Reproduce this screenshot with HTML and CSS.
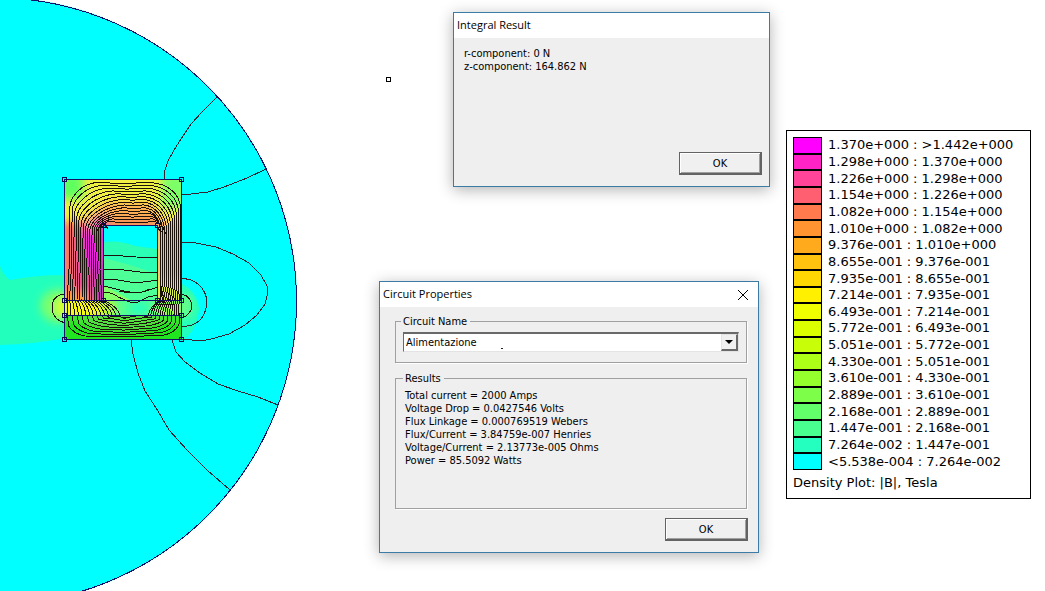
FILE: index.html
```html
<!DOCTYPE html>
<html lang="en">
<head>
<meta charset="utf-8">
<title>Density Plot</title>
<link rel="stylesheet" href="styles.css">
</head>
<body>
<main class="desktop">
  <svg class="plot" width="400" height="591" viewBox="0 0 400 591" aria-label="Flux density plot">
    <defs>
      <filter id="soft" x="-30%" y="-30%" width="160%" height="160%"><feGaussianBlur stdDeviation="4"/></filter>
      <clipPath id="core"><path d="M65 180H182V300H158V225H104V300H65Z"/></clipPath>
      <clipPath id="window"><rect x="104" y="226" width="54" height="75"/></clipPath>
      <clipPath id="gap"><rect x="65" y="300" width="117" height="16"/></clipPath>
      <clipPath id="plate"><rect x="65" y="316" width="117" height="24"/></clipPath>
    </defs>
    <circle cx="-7" cy="301" r="304" fill="#00ffff"/>

    <path d="M0 266Q4 276 10 280Q36 275 66 275V338Q35 344 0 345Z" fill="#22ffbd"/>
    <path d="M182 284Q196 291 199 308Q198 330 182 341Z" fill="#22ffbd"/>
    <g filter="url(#soft)">
      <ellipse cx="58" cy="306" rx="18" ry="17" fill="#77ff70"/>
      <ellipse cx="63" cy="307" rx="8" ry="10" fill="#d8ff20"/>
      <ellipse cx="184" cy="306" rx="9" ry="13" fill="#66ff88"/>
    </g>

    <g clip-path="url(#window)">
      <path d="M104 242Q120 240 135 246L158 249V301H104Z" fill="#2bffb5"/>
      <path d="M104 258L130 265L158 274V301H104Z" fill="#4dff96"/>
      <path d="M104 286L118 293L132 301H104Z" fill="#86ff68"/>
    </g>

    <g clip-path="url(#core)">
      <rect x="65" y="180" width="117" height="121" fill="#eef044"/>
      <g filter="url(#soft)">
        <rect x="58" y="172" width="25" height="27" fill="#60ff60"/>
        <rect x="162" y="174" width="26" height="34" fill="#7dff67"/>
        <rect x="62" y="222" width="46" height="90" fill="#fb7260"/>
        <rect x="74" y="232" width="34" height="66" fill="#ea4f94"/>
        <rect x="83" y="220" width="26" height="50" fill="#f020e0"/>
        <rect x="94" y="262" width="16" height="42" fill="#c030c0"/>
        <path d="M84 220L106 202H150L168 226V232H90Z" fill="#fdb052"/>
        <rect x="94" y="218" width="16" height="16" fill="#d820d8"/>
        <rect x="104" y="219" width="56" height="10" fill="#f58a58"/>
        <rect x="156" y="222" width="28" height="58" fill="#ffb878"/>
        <rect x="158" y="285" width="26" height="22" fill="#d8ee50"/>
        <rect x="62" y="292" width="26" height="16" fill="#ffa535"/>
      </g>
    </g>
    <g clip-path="url(#gap)">
      <rect x="65" y="300" width="117" height="16" fill="#55ff90"/>
      <g filter="url(#soft)">
        <rect x="60" y="296" width="44" height="24" fill="#f8f818"/>
        <rect x="100" y="298" width="15" height="22" fill="#b8f534"/>
        <rect x="130" y="302" width="18" height="12" fill="#28ffc0"/>
        <rect x="158" y="298" width="24" height="22" fill="#9cff4e"/>
      </g>
    </g>
    <g clip-path="url(#plate)">
      <rect x="65" y="316" width="117" height="24" fill="#20e420"/>
      <ellipse cx="123" cy="318" rx="40" ry="15" fill="#55dc42" filter="url(#soft)"/>
      <path d="M65 316H182V322H65Z" fill="#52e63c" filter="url(#soft)"/>
    </g>

    <g class="flux" id="loops"></g>

    <g class="flux">
      <path d="M104 255L116 255.500 136 257 158 257.500M104 269L124 270 140 272H158M104 279L118 280 136 283 158 280M104 286Q116 289 124 291Q138 294 146 291L158 287M104 292Q114 293 118 297L130 302H138L148 297L158 295M119 291L130 293Q144 293 149 289"/>
      <path d="M65 294Q52 295 52 308Q53 320 65 323"/>
      <path d="M182 294Q192 297 192 307Q190 315 182 318"/>
      <path d="M96 232L103 222 108 229M98 228L106 225M156 220L164 228M160 222L166 234M155 226L162 232"/>
    </g>

    <g class="field">
      <path d="M217 97L203 111L191 124L183 136L174 150L168 161L165 170L164 180"/>
      <path d="M266 169L247 178L224 187L208 192L182 195"/>
      <path d="M182 242L196 243L216 247L233 254L249 263L261 275L267 286L268 292L265 304L257 315L245 325L229 334L211 339L201 341L182 339"/>
      <path d="M182 278L191 280Q205 286 207 301Q206 320 192 325L182 327"/>
      <path d="M172 340L176 352L185 362L200 373L218 384L238 391L258 397L278 405"/>
      <path d="M131 340L133 354L138 373L145 391L158 411L169 430L187 450L207 470L230 490"/>
    </g>

    <circle cx="-7" cy="301" r="303.500" class="edge"/>
    <path class="edge" d="M64.500 179.500H181.500V339.500H64.500ZM64.500 300.500H181.500M64.500 315.500H181.500M103.500 300V225.500H157.500V300"/>
    <g class="node">
      <rect x="62.500" y="177.500" width="4" height="4"/><rect x="179.500" y="177.500" width="4" height="4"/>
      <rect x="101.500" y="223.500" width="4" height="4"/><rect x="155.500" y="223.500" width="4" height="4"/>
      <rect x="62.500" y="298.500" width="4" height="4"/><rect x="101.500" y="298.500" width="4" height="4"/>
      <rect x="155.500" y="298.500" width="4" height="4"/><rect x="179.500" y="298.500" width="4" height="4"/>
      <rect x="62.500" y="313.500" width="4" height="4"/><rect x="179.500" y="313.500" width="4" height="4"/>
      <rect x="62.500" y="337.500" width="4" height="4"/><rect x="179.500" y="337.500" width="4" height="4"/>
    </g>
    <rect class="origin" x="386.500" y="77.500" width="4" height="4"/>
  </svg>

  <section class="dialog integral" role="dialog" aria-labelledby="t1">
    <header class="titlebar"><h2 id="t1">Integral Result</h2></header>
    <div class="content">
      <p class="lines">r-component: 0 N<br>z-component: 164.862 N</p>
      <button class="ok" type="button">OK</button>
    </div>
  </section>

  <section class="dialog circuit" role="dialog" aria-labelledby="t2">
    <header class="titlebar"><h2 id="t2">Circuit Properties</h2>
      <button class="close" type="button" aria-label="Close"><svg width="12" height="12" viewBox="0 0 12 12"><path d="M1 1L11 11M11 1L1 11"/></svg></button>
    </header>
    <div class="content">
      <fieldset class="group">
        <legend><label for="circuit">Circuit Name</label></legend>
        <div class="combo">
          <select id="circuit"><option>Alimentazione</option></select>
          <span class="arrow"><svg width="8" height="4" viewBox="0 0 8 4"><path d="M0 0H8L4 4Z"/></svg></span>
        </div>
      </fieldset>
      <fieldset class="group results">
        <legend>Results</legend>
        <p class="lines">Total current = 2000 Amps<br>Voltage Drop = 0.0427546 Volts<br>Flux Linkage = 0.000769519 Webers<br>Flux/Current = 3.84759e-007 Henries<br>Voltage/Current = 2.13773e-005 Ohms<br>Power = 85.5092 Watts</p>
      </fieldset>
      <button class="ok" type="button">OK</button>
    </div>
  </section>

  <aside class="legend">
    <ul class="scale">
      <li><i class="c1"></i>1.370e+000 : &gt;1.442e+000</li>
      <li><i class="c2"></i>1.298e+000 : 1.370e+000</li>
      <li><i class="c3"></i>1.226e+000 : 1.298e+000</li>
      <li><i class="c4"></i>1.154e+000 : 1.226e+000</li>
      <li><i class="c5"></i>1.082e+000 : 1.154e+000</li>
      <li><i class="c6"></i>1.010e+000 : 1.082e+000</li>
      <li><i class="c7"></i>9.376e-001 : 1.010e+000</li>
      <li><i class="c8"></i>8.655e-001 : 9.376e-001</li>
      <li><i class="c9"></i>7.935e-001 : 8.655e-001</li>
      <li><i class="c10"></i>7.214e-001 : 7.935e-001</li>
      <li><i class="c11"></i>6.493e-001 : 7.214e-001</li>
      <li><i class="c12"></i>5.772e-001 : 6.493e-001</li>
      <li><i class="c13"></i>5.051e-001 : 5.772e-001</li>
      <li><i class="c14"></i>4.330e-001 : 5.051e-001</li>
      <li><i class="c15"></i>3.610e-001 : 4.330e-001</li>
      <li><i class="c16"></i>2.889e-001 : 3.610e-001</li>
      <li><i class="c17"></i>2.168e-001 : 2.889e-001</li>
      <li><i class="c18"></i>1.447e-001 : 2.168e-001</li>
      <li><i class="c19"></i>7.264e-002 : 1.447e-001</li>
      <li><i class="c20"></i>&lt;5.538e-004 : 7.264e-002</li>
    </ul>
    <p class="caption">Density Plot: |B|, Tesla</p>
  </aside>
</main>
<script src="flux.js"></script>
</body>
</html>
```
FILE: styles.css
```css
* { box-sizing: border-box; }
body { margin: 0; background: #fff; color: #000; font-family: "DejaVu Sans Condensed", "DejaVu Sans", sans-serif; font-size: 11px; line-height: 13px; }
h2, p, ul { margin: 0; padding: 0; font-weight: normal; }
.desktop { position: relative; min-height: 100vh; overflow: hidden; }
.plot { display: block; }
.flux, .field, .edge, .node, .origin { fill: none; shape-rendering: crispEdges; }
.flux { stroke: #1c120c; }
.field { stroke: #3b2230; }
.edge { stroke: #10106a; }
.node { stroke: #0a0a50; }
.origin { stroke: #000; }

.dialog { position: absolute; display: flex; flex-direction: column; background: #efefef; border: 1px solid #3c7ba6; box-shadow: 0 3px 14px rgba(0, 0, 0, 0.3); }
.integral { left: 453px; top: 12px; width: 317px; height: 175px; }
.circuit { left: 379px; top: 281px; width: 380px; height: 272px; }
.titlebar { display: flex; justify-content: space-between; align-items: center; height: 25px; padding: 0 9px 0 3px; background: #fff; }
.titlebar h2 { font-family: "Open Sans", sans-serif; font-size: 11px; line-height: 16px; padding-bottom: 2px; }
.close { display: flex; padding: 0; border: 0; background: none; }
.close path { stroke: #000; fill: none; }
.content { flex: 1; display: flex; flex-direction: column; padding: 8px 11px 11px 15px; }
.integral .content { padding: 9px 7px 11px 10px; }
.ok { margin-top: auto; align-self: flex-end; width: 83px; height: 23px; padding: 0; font: inherit; color: #000; background: #f0f0f0; border: 1px solid #636363; border-right-width: 2px; border-bottom-width: 2px; box-shadow: inset 1px 1px #fff, inset -1px -1px #a0a0a0; }
.circuit .ok { margin-right: -1px; }

.group { min-width: 0; margin: 0; padding: 4px 7px 10px 7px; border: 1px solid #a0a0a0; box-shadow: 1px 1px #fff; }
.group legend { padding: 0 3px 0 2px; margin-left: -2px; }
.results { flex: none; height: 137px; margin-top: 9px; padding: 4px 9px; }
.combo { position: relative; display: flex; height: 20px; background: #fff; border: 1px solid #e3e3e3; border-top: 2px solid #696969; border-left: 1px solid #696969; }
.combo::after { content: ""; position: absolute; left: 97px; top: 14px; width: 2px; height: 1px; background: #222; }
.combo select { flex: 1; appearance: none; border: 0; padding: 0 0 0 2px; background: transparent; font: inherit; color: #000; }
.arrow { position: absolute; right: 0; top: 0; width: 17px; height: 17px; display: flex; align-items: center; justify-content: center; pointer-events: none; background: #f0f0f0; border: 1px solid #e3e3e3; border-right: 2px solid #696969; border-bottom: 2px solid #696969; }

.legend { position: absolute; left: 786px; top: 130px; width: 245px; padding: 6px 6px 7px; background: #fff; border: 1px solid #000; font-family: "DejaVu Sans", sans-serif; font-size: 13px; line-height: 16px; }
.scale { display: grid; grid-template-rows: repeat(20, 1fr); height: 333px; list-style: none; }
.scale li { display: flex; align-items: center; gap: 6px; white-space: pre; }
.scale i { width: 29px; height: 100%; border: 1px solid #000; }
.caption { margin-top: 5px; }
.c1 { background: #ff00ff; } .c2 { background: #ff22c4; } .c3 { background: #ff4499; } .c4 { background: #ff5f70; }
.c5 { background: #ff7a4c; } .c6 { background: #ff9430; } .c7 { background: #ffaa1c; } .c8 { background: #ffc20e; }
.c9 { background: #ffd804; } .c10 { background: #fff000; } .c11 { background: #f0ff00; } .c12 { background: #dcff00; }
.c13 { background: #c8ff08; } .c14 { background: #adff18; } .c15 { background: #94ff2c; } .c16 { background: #7dff4a; }
.c17 { background: #62ff6a; } .c18 { background: #48ff90; } .c19 { background: #24ffc0; } .c20 { background: #00ffff; }
```
FILE: flux.js
```js
// Flux lines circulating through the core, the air gaps and the lower plate.
const loops = document.getElementById("loops");
const count = 15;
const add = (d) => {
  const path = document.createElementNS("http://www.w3.org/2000/svg", "path");
  path.setAttribute("d", d);
  loops.appendChild(path);
};
for (let k = 0; k < count; k++) {
  const t = k / (count - 1);
  const bow = Math.sin(Math.PI * t);
  const left = 70 + 31 * t;
  const right = Math.max(180.5 - 2 * k, 160.5);
  const top = 182.5 + 2.8 * k;
  const l0 = 67 + 35 * t;
  const l1 = 67 + 53 * t;
  const r1 = 181 - 33 * t;
  const shoulder = 206 + 20 * t + 12 * bow;
  const startTop = 96 + 12 * t + 22 * bow;
  const endTop = 150 + 5 * t - 10 * bow;
  // Limbs and yoke
  add(`M${l0} 300L${left - 1} 270L${left} ${shoulder}` +
    `C${left + 1} ${top + (shoulder - top) * 0.6} ${left + (startTop - left) * 0.4} ${top + 2} ${startTop} ${top}` +
    `L${(startTop + endTop) / 2} ${top + 1}L${endTop} ${top}` +
    `C${endTop + (right - endTop) * 0.6} ${top + 1} ${right} ${top + (shoulder - top) * 0.5} ${right} ${shoulder + 3}` +
    `V284L${Math.max(181 - 1.7 * k, 160)} 300`);
  // Air gaps
  add(`M${l0} 300Q${l1 - 2 * t} 306 ${l1} 316M${r1} 316Q${r1 + 2 * t} 306 ${Math.max(181 - 1.7 * k, 160)} 300`);
}
// Lower plate: shallow arcs hanging from the gap, dipping towards the centre
for (let k = 0; k < 9; k++) {
  const a = 67 + 5 * k;
  const b = 180 - 4 * k;
  const sink = 337 - 2.3 * k;
  add(`M${a} 316L${a + 2} ${316 + (sink - 316) * 0.5}Q${a + 7} ${sink - 3} ${a + 18} ${sink - 1}L124 ${sink}` +
    `L${b - 16} ${sink - 2}Q${b - 5} ${sink - 4} ${b - 1} ${316 + (sink - 316) * 0.4}L${b} 316`);
}
```
